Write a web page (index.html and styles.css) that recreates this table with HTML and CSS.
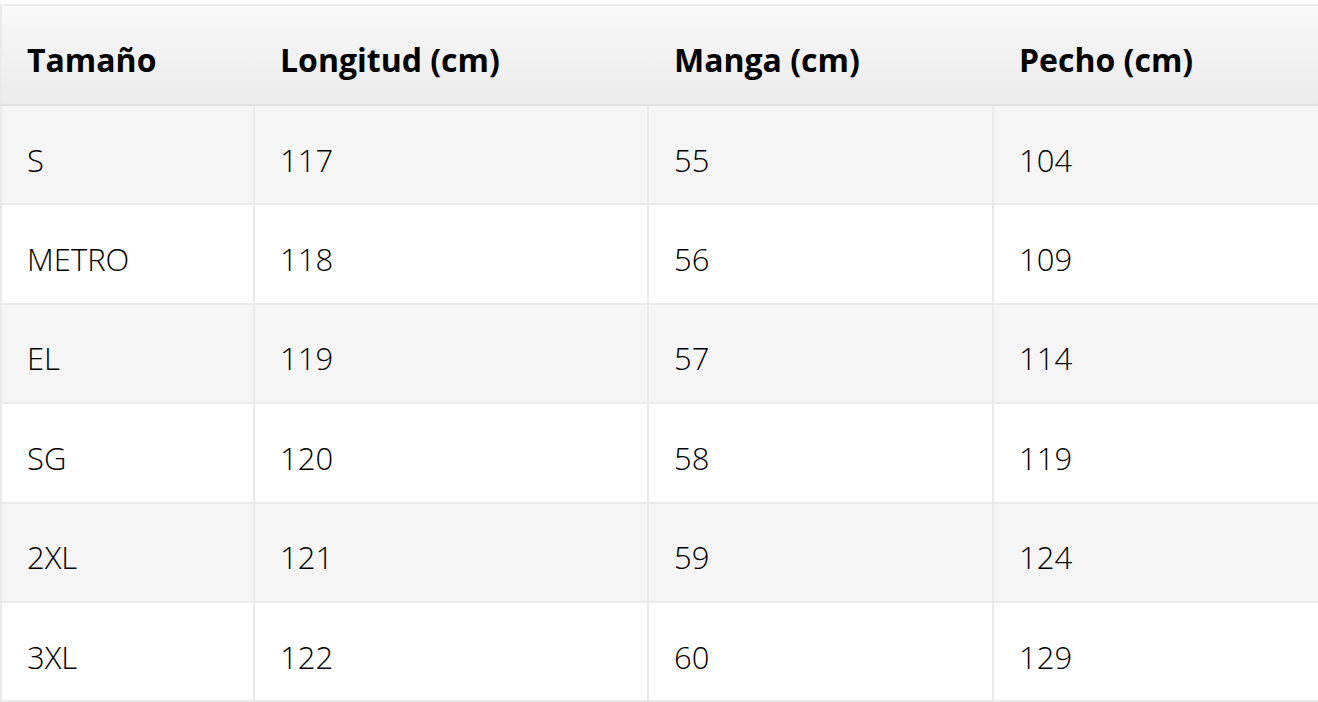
FILE: index.html
```html
<!DOCTYPE html>
<html lang="es">
<head>
<meta charset="utf-8">
<title>Tabla de tallas</title>
<link rel="stylesheet" href="styles.css">
</head>
<body>
<div class="wrap">
<table class="sizes">
  <colgroup>
    <col class="c1"><col class="c2"><col class="c3"><col class="c4">
  </colgroup>
  <thead>
    <tr><th>Tamaño</th><th>Longitud (cm)</th><th>Manga (cm)</th><th>Pecho (cm)</th></tr>
  </thead>
  <tbody>
    <tr><td>S</td><td>117</td><td>55</td><td>104</td></tr>
    <tr><td>METRO</td><td>118</td><td>56</td><td>109</td></tr>
    <tr><td>EL</td><td>119</td><td>57</td><td>114</td></tr>
    <tr><td>SG</td><td>120</td><td>58</td><td>119</td></tr>
    <tr><td>2XL</td><td>121</td><td>59</td><td>124</td></tr>
    <tr><td>3XL</td><td>122</td><td>60</td><td>129</td></tr>
  </tbody>
</table>
</div>
</body>
</html>
```
FILE: styles.css
```css
html, body {
  margin: 0;
  padding: 0;
  background: #ffffff;
  overflow: hidden;
}
.wrap {
  padding-top: 4px;
  width: 1340px;
}
.sizes {
  border-collapse: collapse;
  table-layout: fixed;
  width: 1340px;
  font-family: "Open Sans", "Noto Sans", sans-serif;
  color: #000;
}
.c1 { width: 253px; }
.c2 { width: 394px; }
.c3 { width: 345px; }
.c4 { width: 348px; }
.sizes th,
.sizes td {
  border: 2px solid #eaeaea;
  text-align: left;
  padding: 0 0 0 25px;
  vertical-align: middle;
}
.sizes th {
  height: 100px;
  font-size: 32px;
  font-weight: 700;
  background: linear-gradient(to bottom, #f8f8f8, #ebebeb);
  border-left-color: transparent;
  border-right-color: transparent;
  border-bottom-color: #e2e2e2;
  padding-top: 8px;
  padding-left: 25px;
  box-sizing: border-box;
}
.sizes th:first-child { border-left-color: #eaeaea; }
.sizes td {
  height: 99.4px;
  font-size: 31px;
  font-weight: 300;
  padding-top: 10px;
  box-sizing: border-box;
}
.sizes tbody tr:nth-child(odd) td { background: #f5f5f5; }
.sizes tbody tr:nth-child(even) td { background: #ffffff; }
```
